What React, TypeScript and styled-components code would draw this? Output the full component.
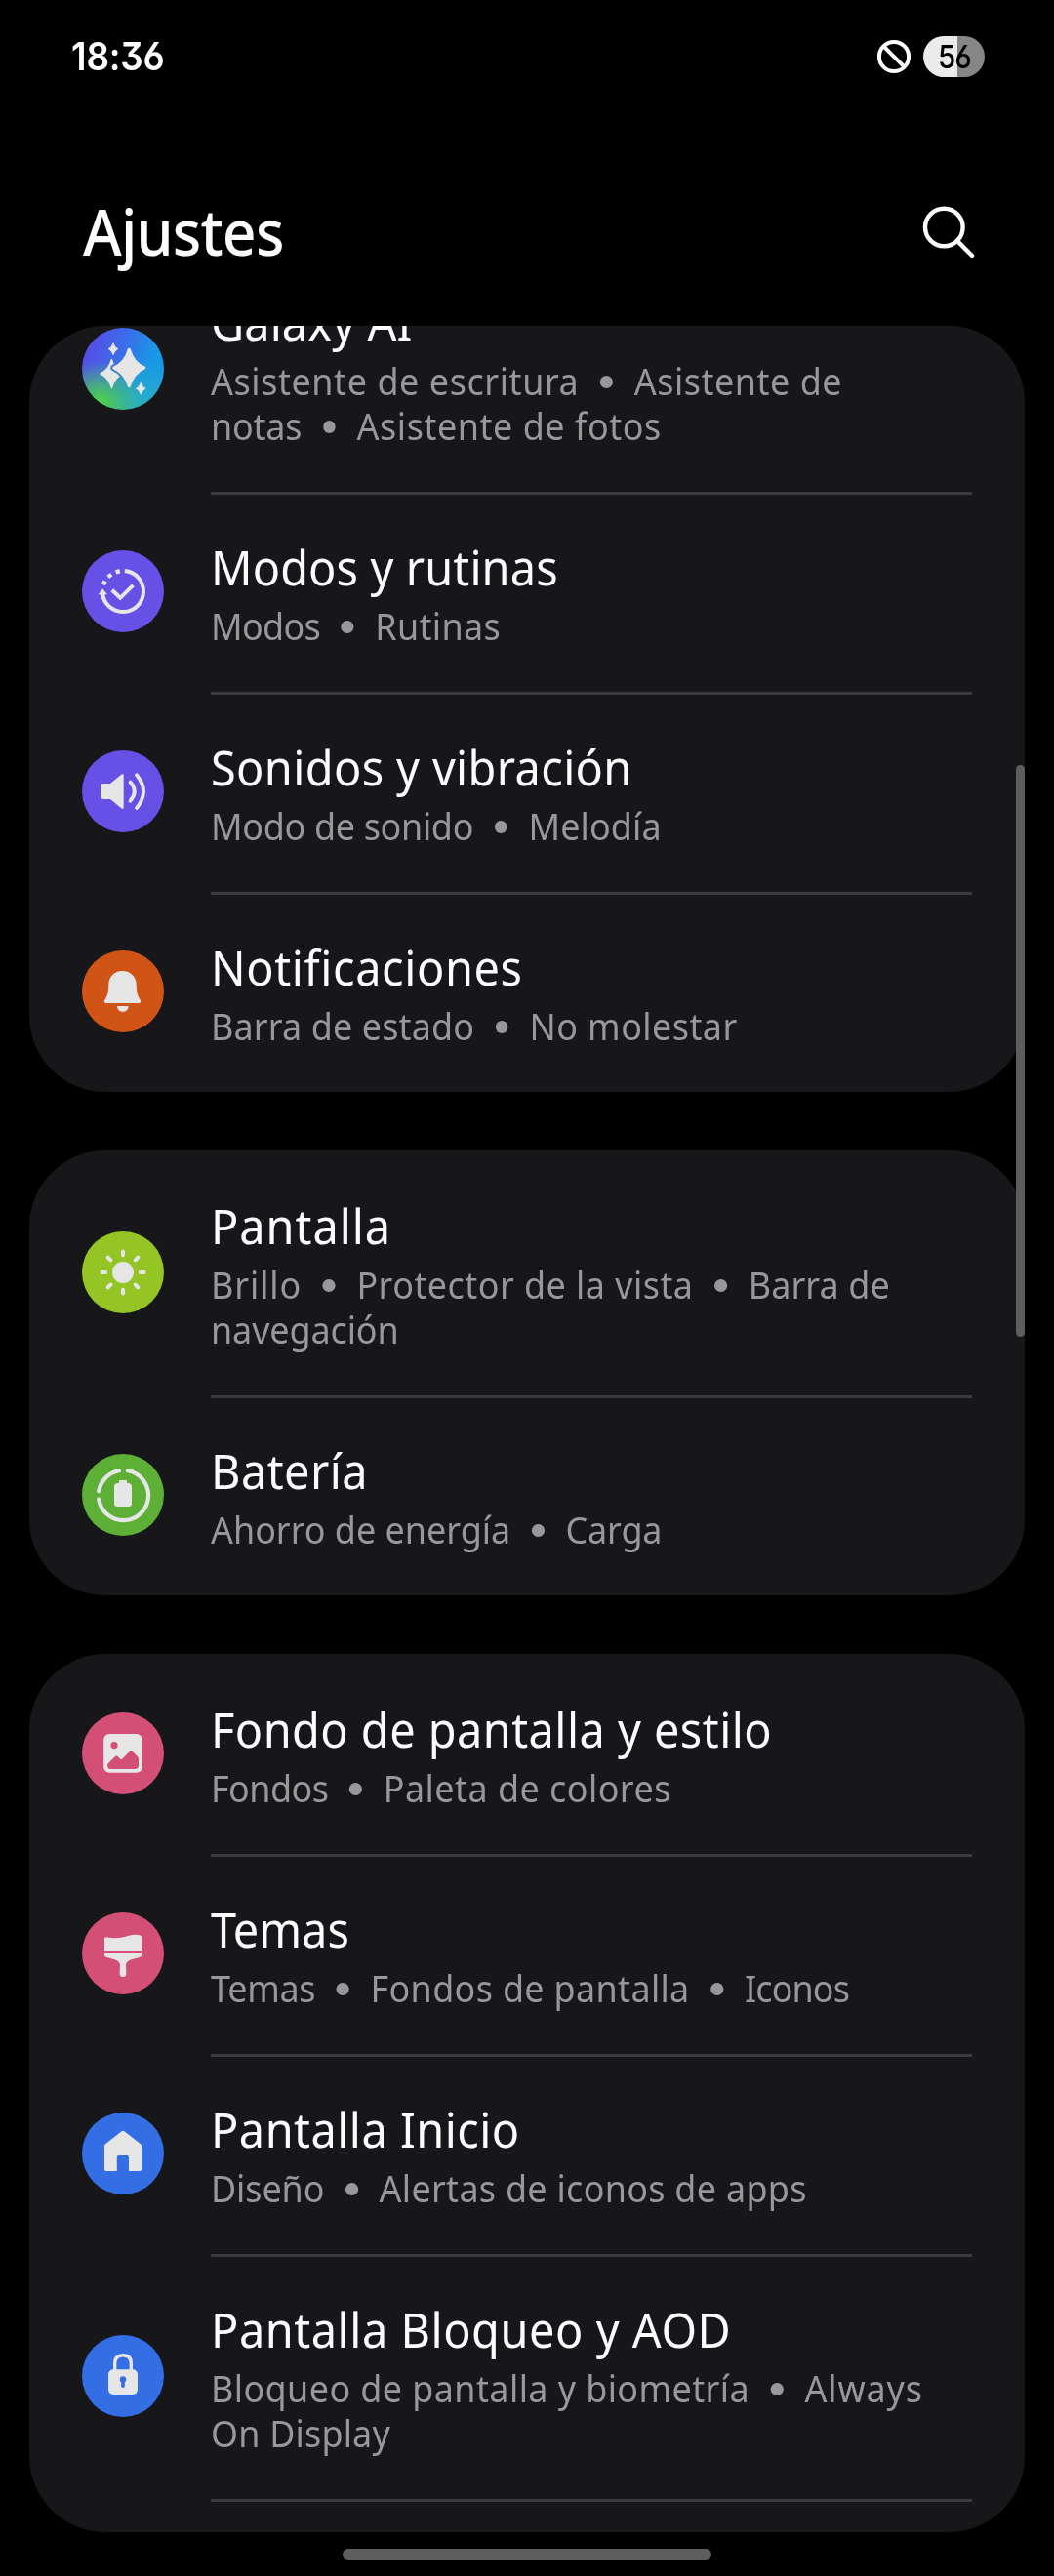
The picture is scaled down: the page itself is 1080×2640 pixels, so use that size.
import React from "react";
import styled, { createGlobalStyle } from "styled-components";

const GlobalStyle = createGlobalStyle`
  * { box-sizing: border-box; }
  body { margin: 0; background: #000; }
`;

const Screen = styled.div`
  position: relative;
  width: 1080px;
  height: 2640px;
  overflow: hidden;
  background: #000;
  color: #fcfcff;
  font-family: "Noto Sans", "Open Sans", sans-serif;
  display: flex;
  flex-direction: column;
`;

const StatusBar = styled.div`
  height: 116px;
  flex: none;
  padding: 0 71px 0 73px;
  display: flex;
  align-items: center;
  justify-content: space-between;
`;

const Clock = styled.span`
  font-family: Inter, "Noto Sans", sans-serif;
  font-feature-settings: "cv09", "ss01", "cv03";
  font-size: 40px;
  line-height: 48px;
  font-weight: 600;
  letter-spacing: -0.2px;
  transform: scaleX(0.92);
  transform-origin: left;
  color: #fff;
`;

const StatusIcons = styled.div`
  display: flex;
  align-items: center;
  gap: 12px;
`;

const BatteryPill = styled.div`
  width: 63px;
  height: 42px;
  border-radius: 21px;
  background: linear-gradient(90deg, #ebebeb 0 35px, #868686 35px);
  display: flex;
  align-items: center;
  justify-content: center;
`;

const BatteryLevel = styled.span`
  font-family: Inter, "Noto Sans", sans-serif;
  font-feature-settings: "ss01", "cv03";
  font-size: 33px;
  line-height: 42px;
  font-weight: 500;
  letter-spacing: -1px;
  transform: scaleX(0.9);
  color: #000;
`;

const Header = styled.header`
  height: 218px;
  flex: none;
  padding: 0 80px 0 85px;
  display: flex;
  align-items: flex-start;
  justify-content: space-between;
`;

const PageTitle = styled.h1`
  margin: 74px 0 0;
  font-size: 66px;
  line-height: 92px;
  font-weight: 500;
  letter-spacing: -0.9px;
  transform: scaleX(0.92);
  transform-origin: left;
`;

const SearchIcon = styled.svg`
  width: 56px;
  height: 56px;
  margin-top: 94px;
`;

const List = styled.main`
  display: flex;
  flex-direction: column;
  gap: 60px;
  padding: 0 30px;
`;

const Card = styled.section<{ $height: number; $anchor?: "start" | "end" }>`
  height: ${(p) => p.$height}px;
  flex: none;
  border-radius: 78px;
  background: #171719;
  overflow: hidden;
  display: flex;
  flex-direction: column;
  justify-content: flex-${(p) => p.$anchor ?? "start"};
`;

const RowBox = styled.div<{ $tall?: boolean }>`
  height: ${(p) => (p.$tall ? 251 : 205)}px;
  flex: none;
  display: grid;
  grid-template-columns: 84px 780px;
  column-gap: 48px;
  padding-left: 54px;
`;

const Badge = styled.div<{ $bg: string }>`
  width: 84px;
  height: 84px;
  align-self: center;
  margin-bottom: 1px;
  border-radius: 50%;
  background: ${(p) => p.$bg};
  svg { display: block; width: 84px; height: 84px; }
`;

const Body = styled.div<{ $divided?: boolean }>`
  border-top: 3px solid ${(p) => (p.$divided ? "#3b3b3d" : "transparent")};
  padding-top: 41px;
`;

const Title = styled.div<{ $track: number }>`
  font-size: 49px;
  line-height: 66px;
  font-weight: 400;
  white-space: nowrap;
  letter-spacing: ${(p) => p.$track}px;
  transform: scaleX(0.957);
  transform-origin: left;
`;

const Summary = styled.div`
  margin-top: 4px;
  font-size: 38px;
  line-height: 46px;
  color: #98989b;
  white-space: nowrap;
  transform: scaleX(0.945);
  transform-origin: left;
`;

const Line = styled.div`
  display: flex;
`;

const Part = styled.span<{ $track: number }>`
  letter-spacing: ${(p) => p.$track}px;
`;

const Dot = styled.i`
  width: 13.8px;
  height: 13px;
  margin: 18px 23px 0 22.8px;
  border-radius: 50%;
  background: #98989b;
`;

const ScrollThumb = styled.div`
  position: absolute;
  left: 1041px;
  top: 784px;
  width: 9px;
  height: 586px;
  border-radius: 5px;
  background: #5d5d5f;
`;

const HomePill = styled.div`
  width: 378px;
  height: 12px;
  margin: 17px auto 0;
  flex: none;
  border-radius: 6px;
  background: #5e5e5e;
`;

const INK = "#e6e6e6";

const star = (cx: number, cy: number, rx: number, ry: number, k = 0.26) =>
  `M${cx} ${cy - ry}Q${cx + rx * k} ${cy - ry * k} ${cx + rx} ${cy}` +
  `Q${cx + rx * k} ${cy + ry * k} ${cx} ${cy + ry}` +
  `Q${cx - rx * k} ${cy + ry * k} ${cx - rx} ${cy}` +
  `Q${cx - rx * k} ${cy - ry * k} ${cx} ${cy - ry}Z`;

const icons = {
  ai: (
    <svg viewBox="0 0 84 84" fill={INK} stroke={INK} strokeLinejoin="round">
      <mask id="gap" maskUnits="userSpaceOnUse" x="0" y="0" width="84" height="84">
        <rect width="84" height="84" fill="#fff" stroke="none" />
        <path d={star(48.3, 41, 15.5, 19)} fill="#000" stroke="#000" strokeWidth="7" />
      </mask>
      <path d={star(30.4, 47, 11.4, 14.4)} strokeWidth="1.6" mask="url(#gap)" />
      <path d={star(48.3, 41, 15.5, 18.8)} strokeWidth="3" />
      <path d={star(32, 21.7, 4.8, 6)} strokeWidth="1" />
      <path d={star(60.3, 62.3, 4.8, 6)} strokeWidth="1" />
    </svg>
  ),
  modes: (
    <svg viewBox="0 0 84 84" fill="none" stroke={INK} strokeWidth="4">
      <path d="M43.8 21.1A21 21 0 1 1 21.1 44" />
      <path d="M16.7 45.5L21 39.2L26 45.2Z" fill={INK} stroke="none" />
      <path d="M30.8 40.8L39.2 48.8L52.4 35.8" />
      <g fill={INK} stroke="none">
        <rect x="-2.1" y="-2.1" width="4.4" height="4.4" transform="translate(36.6 21.7) rotate(-14)" />
        <rect x="-2.1" y="-2.1" width="4.4" height="4.4" transform="translate(28.3 26) rotate(-40)" />
        <rect x="-2.1" y="-2.1" width="4.4" height="4.4" transform="translate(22.6 33.4) rotate(-66)" />
      </g>
    </svg>
  ),
  sound: (
    <svg viewBox="0 0 84 84" fill="none" stroke={INK} strokeLinecap="round">
      <path d="M22 34H29L40.6 24.5Q42.7 23.2 42.7 25.8V58.2Q42.7 60.8 40.6 59.5L29 50H22Q19 50 19 47V37Q19 34 22 34Z" fill={INK} stroke="none" />
      <path d="M49.5 32.6Q58 42 49.5 51.8" strokeWidth="3.8" />
      <path d="M56 25.2Q70 42 56 59" strokeWidth="3.8" />
    </svg>
  ),
  bell: (
    <svg viewBox="0 0 84 84" fill={INK}>
      <path d="M41.5 21C33.5 21 27.3 27 27.3 35C27.3 42 26.6 45.5 23.3 50.8Q22 54 25.2 54H57.8Q61 54 59.7 50.8C56.4 45.5 55.7 42 55.7 35C55.7 27 49.5 21 41.5 21Z" />
      <path d="M36 57H47.7Q47 62.8 41.8 62.8Q36.7 62.8 36 57Z" />
    </svg>
  ),
  sun: (
    <svg viewBox="0 0 84 84" fill={INK} stroke={INK} strokeWidth="4" strokeLinecap="round">
      <circle cx="42" cy="42" r="11" stroke="none" />
      {[0, 45, 90, 135, 180, 225, 270, 315].map((a) => (
        <path key={a} d="M42 20.4V24.2" transform={`rotate(${a} 42 42)`} />
      ))}
    </svg>
  ),
  battery: (
    <svg viewBox="0 0 84 84" fill="none" stroke={INK} strokeWidth="4.2" strokeLinecap="round">
      <path d="M17.2 38.2A25.6 25.6 0 0 1 38 17.3" />
      <path d="M46.8 17.3A25.6 25.6 0 1 1 17.2 46.6" />
      <rect x="33" y="30" width="18" height="24" rx="3.5" fill={INK} stroke="none" />
      <rect x="38" y="27" width="8" height="6" rx="1.2" fill={INK} stroke="none" />
    </svg>
  ),
  picture: (
    <svg viewBox="0 0 84 84" fill="#d44f75">
      <rect x="22.2" y="22" width="39.6" height="39.8" rx="6" fill={INK} />
      <circle cx="33" cy="33.6" r="3.6" />
      <path d="M26 54.5Q26 53 27 52L33.8 45.2Q35.3 43.7 36.8 45.2L39 47.4Q40.2 48.6 41.4 47.4L48.8 40Q50.3 38.6 51.8 40L57 45.2Q58 46.2 58 47.8V54Q58 58 54 58H30Q26 58 26 54.5Z" />
    </svg>
  ),
  brush: (
    <svg viewBox="0 0 84 84" fill={INK}>
      <path d="M23 39V27Q23 25 25 25.2C34 27.2 41 26 48 23.8C53 22.4 56 22.6 59.3 23.2Q61 23.6 61 25.2V39Z" />
      <path d="M23 42H61V44Q61 45.3 59.6 45.7L51.5 48C46.5 49.4 45 51.5 45 54.5C45 57.5 45.4 60 45.4 62.5Q45.2 66 42 66Q38.8 66 38.6 62.5C38.6 60 39 57.5 39 54.5C39 51.5 37.5 49.4 32.5 48L24.4 45.7Q23 45.3 23 44Z" />
    </svg>
  ),
  home: (
    <svg viewBox="0 0 84 84" fill={INK}>
      <path d="M40.3 19.4Q42 18.2 43.7 19.4L60 32.2Q61 33 61 34.4V57.4Q61 60 58.4 60H48V46Q48 44 46 44H37.8Q35.8 44 35.8 46V60H25.6Q23 60 23 57.4V34.4Q23 33 24 32.2Z" />
    </svg>
  ),
  lock: (
    <svg viewBox="0 0 84 84" fill={INK}>
      <path d="M33.7 36V29Q33.7 20.7 42 20.7Q50.3 20.7 50.3 29V36" fill="none" stroke={INK} strokeWidth="3.4" />
      <rect x="27" y="35.2" width="30" height="25.8" rx="5" />
      <circle cx="42" cy="45.4" r="3.2" fill="#336ee5" />
      <path d="M42 46V52.3" stroke="#336ee5" strokeWidth="3.6" strokeLinecap="round" />
    </svg>
  ),
};

/** A piece of text with its letter spacing in pixels. */
type Tracked = [text: string, track: number];

type RowProps = {
  icon: keyof typeof icons;
  bg: string;
  title: Tracked;
  lines: Tracked[][];
  divided?: boolean;
};

const Row = ({ icon, bg, title, lines, divided }: RowProps) => (
  <RowBox $tall={lines.length > 1}>
    <Badge $bg={bg}>{icons[icon]}</Badge>
    <Body $divided={divided}>
      <Title $track={title[1]}>{title[0]}</Title>
      <Summary>
        {lines.map((parts, i) => (
          <Line key={i}>
            {parts.map(([text, track], j) => (
              <React.Fragment key={j}>
                {j > 0 && <Dot />}
                <Part $track={track}>{text}</Part>
              </React.Fragment>
            ))}
          </Line>
        ))}
      </Summary>
    </Body>
  </RowBox>
);

const AI_BG =
  "radial-gradient(circle at 20% 95%, #4bcb55 0, #4bcb55 8%, rgba(60,190,120,0) 44%), radial-gradient(circle at 75% 100%, #2bb0c4 0, rgba(43,176,196,0) 50%), linear-gradient(112deg, #5450e8 14%, #3b6de8 42%, #1898e8 72%)";

const VIOLET = "#6650e5";
const PINK = "#d44f75";
const BLUE = "#336ee5";

export default function App() {
  return (
    <Screen>
      <GlobalStyle />
      <StatusBar>
        <Clock>18:36</Clock>
        <StatusIcons>
          <svg width="36" height="36" viewBox="0 0 36 36" fill="none" stroke="#fff" strokeWidth="4">
            <circle cx="18" cy="18" r="15.1" />
            <path d="M7.3 7.3L28.7 28.7" />
          </svg>
          <BatteryPill>
            <BatteryLevel>56</BatteryLevel>
          </BatteryPill>
        </StatusIcons>
      </StatusBar>
      <Header>
        <PageTitle>Ajustes</PageTitle>
        <SearchIcon viewBox="0 0 56 56" fill="none" stroke="#fcfcff" strokeWidth="4.4" strokeLinecap="round">
          <circle cx="23.3" cy="23" r="19.3" />
          <path d="M37.4 37.4L52 52" />
        </SearchIcon>
      </Header>
      <List>
        <Card $height={785} $anchor="end">
          <Row
            icon="ai"
            bg={AI_BG}
            title={["Galaxy AI", 0.1]}
            lines={[
              [["Asistente de escritura", 0.62], ["Asistente de", 0.58]],
              [["notas", -0.2], ["Asistente de fotos", 0.58]],
            ]}
          />
          <Row divided icon="modes" bg={VIOLET} title={["Modos y rutinas", 0.12]} lines={[[["Modos", -0.7], ["Rutinas", 0.35]]]} />
          <Row divided icon="sound" bg={VIOLET} title={["Sonidos y vibración", 0.39]} lines={[[["Modo de sonido", -0.32], ["Melodía", 0.17]]]} />
          <Row divided icon="bell" bg="#d05415" title={["Notificaciones", 0.65]} lines={[[["Barra de estado", 0.15], ["No molestar", 0.48]]]} />
        </Card>
        <Card $height={456}>
          <Row
            icon="sun"
            bg="#94c524"
            title={["Pantalla", 1]}
            lines={[
              [["Brillo", 0.95], ["Protector de la vista", 0.5], ["Barra de", 0.1]],
              [["navegación", -0.1]],
            ]}
          />
          <Row divided icon="battery" bg="#5db035" title={["Batería", 0.45]} lines={[[["Ahorro de energía", 0], ["Carga", -0.15]]]} />
        </Card>
        <Card $height={900}>
          <Row icon="picture" bg={PINK} title={["Fondo de pantalla y estilo", 0.48]} lines={[[["Fondos", -0.55], ["Paleta de colores", 0.5]]]} />
          <Row divided icon="brush" bg={PINK} title={["Temas", 0]} lines={[[["Temas", -0.3], ["Fondos de pantalla", 0.37], ["Iconos", -0.9]]]} />
          <Row divided icon="home" bg={BLUE} title={["Pantalla Inicio", 0.5]} lines={[[["Diseño", -0.1], ["Alertas de iconos de apps", 0.32]]]} />
          <Row
            divided
            icon="lock"
            bg={BLUE}
            title={["Pantalla Bloqueo y AOD", 0.57]}
            lines={[
              [["Bloqueo de pantalla y biometría", 0.45], ["Always", 0.96]],
              [["On Display", 0.2]],
            ]}
          />
          <RowBox>
            <span />
            <Body $divided />
          </RowBox>
        </Card>
      </List>
      <HomePill />
      <ScrollThumb />
    </Screen>
  );
}
